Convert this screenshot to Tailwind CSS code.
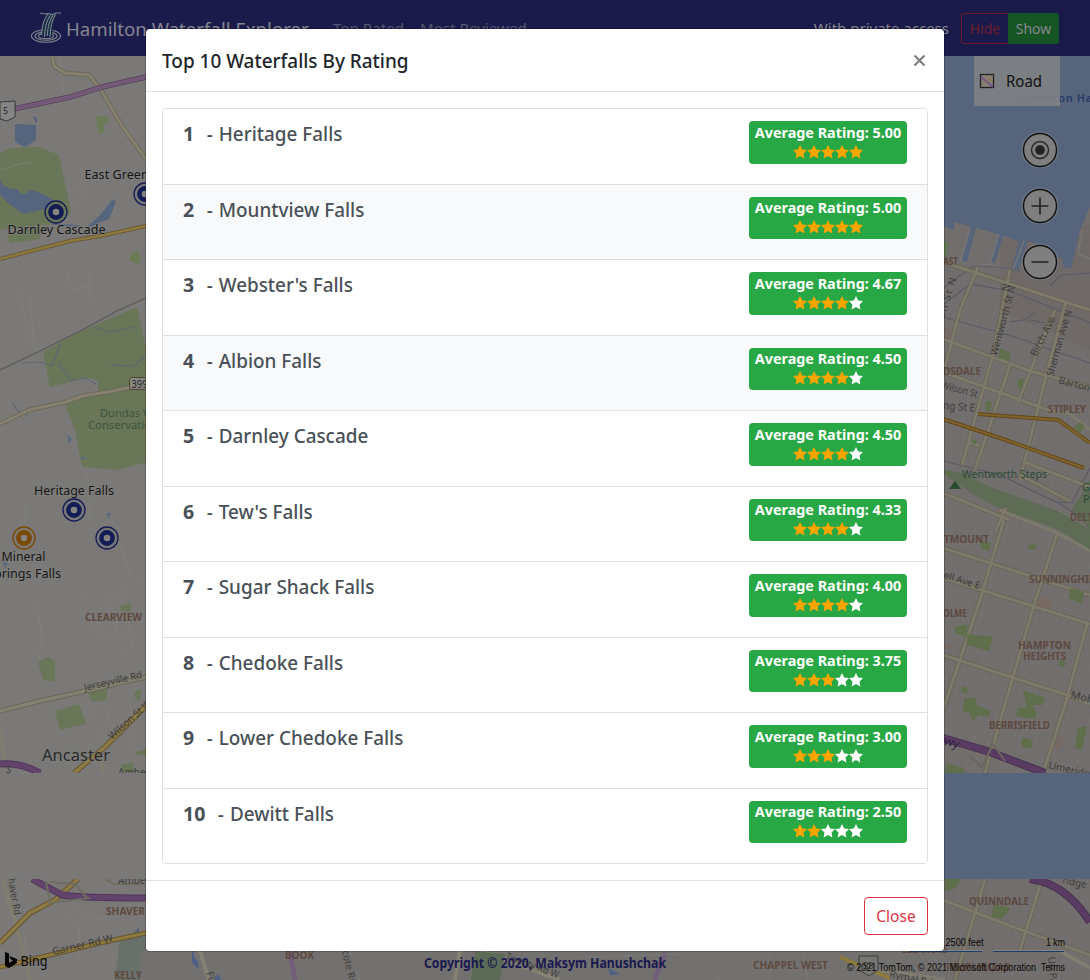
<!DOCTYPE html>
<html lang="en">
<head>
<meta charset="utf-8">
<title>Hamilton Waterfall Explorer</title>
<script src="https://cdn.jsdelivr.net/npm/@tailwindcss/browser@4"></script>
</head>
<body class="relative h-[980px] w-[1090px] overflow-hidden bg-[#7a7977] font-['Noto_Sans',sans-serif]">

<!-- Map canvas -->
<svg class="absolute inset-0" width="1090" height="980" viewBox="0 0 1090 980" fill="none" font-family="Noto Sans, sans-serif">
  <defs>
    <pattern id="streets" width="15" height="30" patternUnits="userSpaceOnUse" patternTransform="rotate(17)">
      <path d="M0 0H15M0 0V30M7.500 0V30" stroke="#7c7875" stroke-width="1"/>
    </pattern>
    <g id="pin"><circle r="11" stroke-width="1.300" stroke="currentColor"/><circle r="5.600" stroke="currentColor" stroke-width="4.600" fill="#858483"/></g>
  </defs>
  <rect y="56" width="1090" height="924" fill="#7a7977"/>
  <!-- west side -->
  <g stroke="#807f7c" stroke-width="1">
    <path d="M60 56L63 92M20 290L28 340L36 350M30 296L34 345L42 352M68 190L81 186L84 200L66 206M67 270L71 290L88 286M90 270L89 290L92 305M25 504L26 560M36 595L42 640L38 660M82 600L96 590L120 600M80 610L100 625L140 620M85 625L110 640L140 635M120 585L128 620L134 650M110 595L118 640L130 660M85 690L95 720L105 750M100 690L115 735M130 700L135 750M62 910L80 930L78 960M70 905L95 920L120 915M20 910L28 960M85 465L90 495L89 520M115 530L130 575L146 582"/>
  </g>
  <path d="M0 153L10 148L39 147L59 155L71 212L60 223L0 230Z" fill="#697657"/>
  <path d="M7 235L40 226V239L10 243Z" fill="#6b7759"/>
  <path d="M0 170L20 164L30 162" stroke="#7c8371"/>
  <path d="M0 180Q5 190 17 189Q24 199 29 190Q40 191 53 200L48 208L24 214Q10 206 0 195ZM15 124L36 125L36 140L25 147L15 142ZM32 116L37 118V124ZM88 226L100 215L113 199L116 202L109 219L98 223L91 227Z" fill="#55657d"/>
  <path d="M52 224L80 226" stroke="#55657d" stroke-width="1.500"/>
  <path d="M96 116L109 117L108 123L103 124L105 132L99 134ZM130 255L138 250L141 260L138 264L130 261Z" fill="#6b7b56"/>
  <path d="M52 56L54 66L65 73L89 75L101 90L122 126L146 159" stroke="#6c6452" stroke-width="4.500"/>
  <path d="M52 56L54 66L65 73L89 75L101 90L122 126L146 159" stroke="#858070" stroke-width="3"/>
  <path d="M14 109L70 97L102 87L146 77" stroke="#5a465c" stroke-width="5.500"/>
  <path d="M14 109L70 97L102 87L146 77" stroke="#785f7e" stroke-width="3.500"/>
  <path d="M14 109L70 97L102 87L146 77" stroke="#6b4e70" stroke-width=".8"/>
  <path d="M0 102L15 101V117L7 121L0 119Z" fill="#858585" stroke="#393939"/>
  <text x="3" y="114" font-size="9" fill="#222">5</text>
  <path d="M0 259L70 241L100 236L146 226" stroke="#665333" stroke-width="4"/>
  <path d="M0 259L70 241L100 236L146 226" stroke="#8b793d" stroke-width="2.500"/>
  <path d="M43 352L75 334L137 307L146 348V462L118 470L82 467L75 430L65 405L98 392V382Q92 376 82 379L50 387Z" fill="#697657"/>
  <path d="M0 370L38 352L82 330L117 311L146 298" stroke="#5b5957" stroke-width="1.300"/>
  <path d="M22 363L42 362L52 366L61 343M58 362L70 380L85 378L96 384M93 327L110 332L136 327M111 365L134 366L146 355M13 403L17 410L28 416" stroke="#5f6872" stroke-width="1.200"/>
  <path d="M0 424L29 410L66 402L82 396L113 391L131 387L146 386" stroke="#6c6452" stroke-width="4.500"/>
  <path d="M0 424L29 410L66 402L82 396L113 391L131 387L146 386" stroke="#858070" stroke-width="3"/>
  <rect x="129.500" y="377.500" width="20" height="12" rx="2" fill="#858581" stroke="#4e452e"/>
  <text x="131.500" y="387.500" font-size="10" fill="#252525" textLength="16" lengthAdjust="spacingAndGlyphs">399</text>
  <path d="M67 435L72 439L69 444ZM81 457H87L82 460ZM107 513L111 513L108 519ZM3 562L8 563L5 568Z" fill="#596983"/>
  <path d="M38 662L48 657L55 661V682L43 680ZM120 606L131 603V612L121 611ZM88 692L107 687V700L92 702ZM55 711L79 704L86 724L60 730ZM134 692L141 689L140 701L136 700ZM121 765L133 762L134 772H122ZM136 752L146 749V756L136 754Z" fill="#697657"/>
  <path d="M0 711L40 701L90 690L146 677" stroke="#686151" stroke-width="5"/>
  <path d="M0 711L40 701L90 690L146 677" stroke="#838071" stroke-width="3.500"/>
  <path d="M0 730L5 764M99 754L104 773M2 879L15 920L30 980" stroke="#817e70" stroke-width="4"/>
  <path d="M74 773L105 747L146 706M0 943L30 913L55 900L78 879" stroke="#665333" stroke-width="5.500"/>
  <path d="M74 773L105 747L146 706M0 943L30 913L55 900L78 879" stroke="#8c7a46" stroke-width="3.500"/>
  <path d="M0 764Q20 762 40 773M32 879L62 895Q80 898 146 898" stroke="#50345a" stroke-width="7"/>
  <path d="M0 764Q20 762 40 773M32 879L62 895Q80 898 146 898" stroke="#62436c" stroke-width="5"/>
  <path d="M46 882L50 903L90 898M50 882L75 884L87 898M105 879L114 884L140 884" stroke="#6e6d60" stroke-width="2"/>
  <path d="M120 940L146 935V980H115Z" fill="#68706a"/><path d="M133 934L139 927V934Z" fill="#55657d"/>
  <path d="M0 967L50 955L100 943L146 933" stroke="#665333" stroke-width="5"/>
  <path d="M0 967L50 955L100 943L146 933" stroke="#8c793c" stroke-width="3"/>
  <rect y="773" width="146" height="106" fill="#7a7977"/>
  <!-- strip under the dialog -->
  <rect x="140" y="950" width="810" height="30" fill="#73716f"/>
  <path d="M200 951L209 980M460 951L455 980M481 951L560 980" stroke="#858173" stroke-width="4"/>
  <path d="M290 951L295 980M665 951L655 980" stroke="#735e7b" stroke-width="5"/>
  <path d="M475 951L505 954L500 980H471Z" fill="#5b6b55"/><path d="M192 951V962L199 970L198 962L194 957V951ZM214 980L218 974L222 980ZM608 968L620 974L610 975Z" fill="#4e6087"/>
  <path d="M350 951L360 980M570 958L680 954M690 951L720 980M770 951V980M802 951L808 980" stroke="#7b7976"/>
  <!-- east side -->
  <path d="M943 56H1090V980H943Z" fill="#716e6d"/>
  <path d="M943 290H1090V980H943Z" fill="url(#streets)" opacity=".4"/>
  <path d="M1000 240L1090 225V350L1000 310Z" fill="#6f6866" opacity=".8"/>
  <path d="M943 56H1090V207L1080 230L1071 268H1063V258L1048 256L1038 244L1028 241L1019 270L1012 268L1019 241L1003 236L995 263L990 262L998 234L976 228L967 262L961 260L970 226L954 222V230L943 226Z" fill="#56657b"/>
  <path d="M970 228L961 261M999 234L990 264L972 267M1024 241L1013 270L991 265M1082 230L1078 254L1090 259" stroke="#7b7977" stroke-width="1.300"/>
  <path d="M943 240L949 243L946 256L943 258Z" fill="#617551"/>
  <g stroke="#5a5b67" stroke-width="1.200">
    <path d="M943 289L958 277L974 266L1000 267L1020 271M943 305L970 284L1010 291L1090 323M943 317L1015 337L1060 353L1090 363M1050 286L1061 275L1090 273M1010 322L1025 320L1036 312M1030 320L1045 323M943 461L1000 475L1060 504L1090 523M1055 502L1072 503L1090 468"/>
  </g>
  <path d="M943 470Q963 471 990 487L1060 512L1090 530V551Q1065 530 1035 521Q990 510 943 473Z" fill="#5e6b55"/>
  <path d="M1078 500L1090 480V530L1072 510Z" fill="#5e6b55"/>
  <path d="M991 513L1006 507L1005 516L990 513ZM943 327L954 331L950 343L943 340ZM1041 597L1053 600L1050 611L1034 610ZM943 642L960 649L943 648ZM1058 734L1064 741L1059 750L1054 748Z" fill="#796965"/>
  <g stroke="#686351" stroke-width="4.500">
    <path d="M943 262L1090 310M943 339L1030 371L1090 387M978 267L960 310L943 375M943 372L1048 410M1010 270L993 355L962 465M1066 302L1045 380L1020 480M1010 365L975 470M1035 360L1018 402M1055 310L1034 360M968 442L980 446M1024 462L1090 487M1020 475L1070 501M943 493L1010 520M1006 508L996 530M1004 520L980 600L943 710M1057 534L1034 605L985 773M943 548L1090 595M943 578L1090 624M943 655L1070 696L1090 704M1087 624L1065 705L1043 773M943 900L1000 922L1090 955M985 879L955 980M1042 879L1020 950"/>
  </g>
  <g stroke="#7d7a6c" stroke-width="3">
    <path d="M943 262L1090 310M943 339L1030 371L1090 387M978 267L960 310L943 375M943 372L1048 410L1070 414L1090 430M1010 270L993 355L962 465M1066 302L1045 380L1020 480M1010 365L975 470M1035 360L1018 402M1055 310L1034 360M968 442L980 446M1024 462L1090 487M1020 475L1070 501M943 493L1010 520M1006 508L996 530M1004 520L980 600L943 710M1057 534L1034 605L985 773M943 548L1090 595M943 578L1090 624M943 655L1070 696L1090 704M1087 624L1065 705L1043 773M943 900L1000 922L1090 955M985 879L955 980M1042 879L1020 950M1000 510L1055 532Q1080 545 1090 551"/>
  </g>
  <path d="M978 414L1058 420L1090 443M943 419L1000 438L1084 468" stroke="#644819" stroke-width="4"/>
  <path d="M978 414L1058 420L1090 443M943 419L1000 438L1084 468" stroke="#7d622d" stroke-width="2.200"/>
  <path d="M1000 348L1010 353L1009 361L998 358ZM1018 380L1024 378L1022 389L1017 387ZM986 401L992 401L990 412L985 410ZM1074 427L1080 422L1085 427L1078 434ZM973 439L977 440L975 445L972 443ZM943 470L950 472V479ZM1029 545L1037 544L1035 550L1029 549ZM980 541L991 543L989 551L981 549ZM1070 588L1084 592L1082 604L1069 598ZM955 627L967 624V634L993 637L989 651L967 645V637L955 633ZM1060 660L1066 662L1064 667L1059 666ZM962 686L968 688L966 694L961 692ZM964 699L975 697L977 705L990 711V717L978 715L973 721L968 712H963ZM1023 690L1045 698L1043 705H1032L1037 713L1035 719L1016 716L1018 708L1027 707ZM1022 737L1033 741L1031 749L1021 746ZM1078 728L1087 726L1082 750L1075 748ZM946 763L963 768L965 773H945ZM945 879H962L955 888L945 891ZM994 904L1011 908L1002 919L991 917Z" fill="#5f6f4c"/>
  <path d="M943 738L990 752L1045 773M1030 879Q1065 883 1090 922" stroke="#47314f" stroke-width="8"/>
  <path d="M943 738L990 752L1045 773M1030 879Q1065 883 1090 922" stroke="#5a3c63" stroke-width="6"/>
  <path d="M970 756L982 767L993 744L1005 761" stroke="#6b675e" stroke-width="2"/>
  <path d="M1060 951L1090 968M880 970L945 980" stroke="#807c70" stroke-width="4"/>
  <path d="M840 957L870 970L890 978" stroke="#8c793c" stroke-width="4"/>
  <rect x="943" y="773" width="147" height="106" fill="#56657b"/>
  <path d="M949 489L955 481L961 489Z" fill="#294b2f"/>

  <!-- map labels -->
  <g font-size="12" fill="#161616" stroke="#858483" stroke-width="2" stroke-opacity=".45" paint-order="stroke" stroke-linejoin="round">
    <text x="84.500" y="179" textLength="87" lengthAdjust="spacingAndGlyphs">East Greenbelt</text>
    <text x="7.500" y="234" textLength="98" lengthAdjust="spacingAndGlyphs">Darnley Cascade</text>
    <text x="34" y="495" textLength="80" lengthAdjust="spacingAndGlyphs">Heritage Falls</text>
    <text x="1.500" y="561" textLength="44" lengthAdjust="spacingAndGlyphs">Mineral</text>
    <text x="-13" y="578" textLength="74" lengthAdjust="spacingAndGlyphs">Springs Falls</text>
    <text x="42" y="761" font-size="17" fill="#292929" textLength="68" lengthAdjust="spacingAndGlyphs">Ancaster</text>
  </g>
  <g fill="#3c5540" font-size="11">
    <text x="100" y="417" textLength="73" lengthAdjust="spacingAndGlyphs">Dundas Valley</text>
    <text x="88" y="429" textLength="70" lengthAdjust="spacingAndGlyphs">Conservation</text>
    <text x="962" y="478" fill="#294b35" textLength="85" lengthAdjust="spacingAndGlyphs">Wentworth Steps</text>
    <text x="1082" y="491" fill="#294b35">Gage</text><text x="1083" y="503" fill="#294b35">Park</text>
  </g>
  <g fill="#5e483f" font-size="10.200" font-weight="700">
    <text x="85" y="621" textLength="57" lengthAdjust="spacingAndGlyphs">CLEARVIEW</text>
    <text x="106" y="915" textLength="39" lengthAdjust="spacingAndGlyphs">SHAVER</text>
    <text x="114" y="979" textLength="28" lengthAdjust="spacingAndGlyphs">KELLY</text>
    <text x="285" y="959" textLength="29" lengthAdjust="spacingAndGlyphs">BOOK</text>
    <text x="943" y="265" textLength="15" lengthAdjust="spacingAndGlyphs">AST</text>
    <text x="943" y="375" textLength="38" lengthAdjust="spacingAndGlyphs">DSDALE</text>
    <text x="1048" y="413" textLength="38" lengthAdjust="spacingAndGlyphs">STIPLEY</text>
    <text x="1070" y="521" textLength="29" lengthAdjust="spacingAndGlyphs">DELTA</text>
    <text x="944" y="543" textLength="45" lengthAdjust="spacingAndGlyphs">TMOUNT</text>
    <text x="1029" y="583" textLength="71" lengthAdjust="spacingAndGlyphs">SUNNINGHILL</text>
    <text x="943" y="617" textLength="24" lengthAdjust="spacingAndGlyphs">OLME</text>
    <text x="1018" y="649" textLength="53" lengthAdjust="spacingAndGlyphs">HAMPTON</text>
    <text x="1023" y="660" textLength="43" lengthAdjust="spacingAndGlyphs">HEIGHTS</text>
    <text x="989" y="729" textLength="61" lengthAdjust="spacingAndGlyphs">BERRISFIELD</text>
    <text x="969" y="905" textLength="60" lengthAdjust="spacingAndGlyphs">QUINNDALE</text>
    <text x="902" y="953" textLength="46" lengthAdjust="spacingAndGlyphs">ELEANORS</text>
    <text x="753" y="969" textLength="75" lengthAdjust="spacingAndGlyphs">CHAPPEL WEST</text>
    <text x="945" y="971" textLength="66" lengthAdjust="spacingAndGlyphs">TEMPLEMEAD</text>
  </g>
  <g fill="#3f3e3c" font-size="10">
    <text transform="translate(85 691) rotate(-13)" textLength="59" lengthAdjust="spacingAndGlyphs">Jerseyville Rd</text>
    <text transform="translate(112 740) rotate(-42)" textLength="54" lengthAdjust="spacingAndGlyphs">Wilson St W</text>
    <text transform="translate(53 955) rotate(-13)" textLength="62" lengthAdjust="spacingAndGlyphs">Garner Rd W</text>
    <text transform="translate(8 879) rotate(80)" textLength="37" lengthAdjust="spacingAndGlyphs">haver Rd</text>
    <text x="118" y="776">Ambe</text><rect x="117" y="773" width="29" height="10" fill="#7a7977"/>
    <text x="118" y="884">Ambe</text><rect x="117" y="870" width="29" height="9" fill="#7a7977"/>
    <text x="5" y="772" font-size="10" transform="rotate(20 5 772)">S</text>
    <text transform="translate(342 951) rotate(77)">cote Rd</text>
    <text transform="translate(206 973) rotate(70)">Fi</text>
    <text transform="translate(505 959) rotate(20)" textLength="56" lengthAdjust="spacingAndGlyphs">Twenty Rd W</text>
    <text transform="translate(889 977) rotate(12)">Rymal Rd</text>
    <text transform="translate(1008 292) rotate(-74)">N</text>
    <text transform="translate(944 319) rotate(-73)" textLength="42">on St N</text>
    <text transform="translate(997 356) rotate(-75)" textLength="72" lengthAdjust="spacingAndGlyphs">Wentworth St N</text>
    <text transform="translate(1036 357) rotate(-63)" textLength="43" lengthAdjust="spacingAndGlyphs">Birch Ave</text>
    <text transform="translate(1053 377) rotate(-74)" textLength="69" lengthAdjust="spacingAndGlyphs">Sherman Ave N</text>
    <text transform="translate(1058 383) rotate(15)" textLength="52">Barton St E</text>
    <text transform="translate(941 388) rotate(15)" textLength="37" lengthAdjust="spacingAndGlyphs">Wilson St</text>
    <text transform="translate(943 409) rotate(5)" font-size="11" textLength="32" lengthAdjust="spacingAndGlyphs">ng St E</text>
    <text transform="translate(943 578) rotate(17)" textLength="38" lengthAdjust="spacingAndGlyphs">ell Ave E</text>
    <text transform="translate(1070 698) rotate(14)" font-size="11">Mohawk</text>
    <text transform="translate(1048 768) rotate(13)">Limeridge</text><rect x="1040" y="773" width="50" height="12" fill="#56657b"/>
    <text transform="translate(943 744) rotate(17)" fill="#331f46" font-size="12">wy</text>
    <text transform="translate(1062 883) rotate(12)">ridge</text><rect x="1055" y="868" width="35" height="11" fill="#56657b"/>
    <text transform="translate(1048 957) rotate(85)">Up Pa</text>
  </g>
  <g color="#141c56"><use href="#pin" x="56" y="212"/><use href="#pin" x="145" y="194"/><use href="#pin" x="74" y="510"/><use href="#pin" x="107" y="538"/></g>
  <g color="#7a4a04"><use href="#pin" x="24" y="538"/></g>

  <!-- map controls -->
  <text x="1019" y="102" font-size="11" font-weight="600" fill="#253a69" textLength="106">Hamilton Harbour</text>
  <rect x="974" y="56" width="86" height="50" fill="#7f8184" opacity=".9"/>
  <rect x="980.500" y="74.500" width="13" height="13" fill="#858078" stroke="#202020" stroke-width="1.300"/>
  <path d="M981 77L986 81L993 87" stroke="#76548b" stroke-width="1.800"/><path d="M981 86L986 82L993 75M984 75L992 82" stroke="#94784d" stroke-width="1"/>
  <text x="1006" y="87" font-size="15.500" fill="#111" textLength="36" lengthAdjust="spacingAndGlyphs">Road</text>
  <g fill="#7f7f80" stroke="#121212" stroke-width="1.400">
    <g stroke="#83858a" stroke-width="3" opacity=".5"><circle cx="1040" cy="150" r="17"/><circle cx="1040" cy="206" r="17"/><circle cx="1040" cy="262" r="17"/></g>
    <circle cx="1040" cy="150" r="16.500"/><circle cx="1040" cy="206" r="16.500"/><circle cx="1040" cy="262" r="16.500"/>
    <circle cx="1040" cy="150" r="8.500" stroke="#272727"/><circle cx="1040" cy="150" r="4.800" fill="#222" stroke="none"/>
    <path d="M1031.500 206H1048.500M1040 197.500V214.500M1031.500 262H1048.500" stroke="#222" stroke-width="1.600"/>
  </g>
  <path d="M5 952L9 953.500V963L13 960.500L10.500 959L9.500 956L17 959V963L9 968L5 966Z" fill="#050505"/>
  <text x="20.500" y="966" font-size="14" fill="#080808" textLength="27" lengthAdjust="spacingAndGlyphs">Bing</text>
  <path d="M859 956H878V970L869 976L859 970Z" stroke="#3c3c3c" fill="#777672"/><text x="863" y="969" font-size="9" fill="#333">53</text>
  <g font-size="10" fill="#080808" font-family="Liberation Sans, sans-serif">
    <text x="945.500" y="946" textLength="38" lengthAdjust="spacingAndGlyphs">2500 feet</text>
    <text x="1046" y="946" textLength="19" lengthAdjust="spacingAndGlyphs">1 km</text>
    <text x="847" y="971" textLength="189" lengthAdjust="spacingAndGlyphs">© 2021 TomTom, © 2021 Microsoft Corporation</text>
    <text x="1041" y="971" textLength="24" lengthAdjust="spacingAndGlyphs">Terms</text>
  </g>
  <path d="M910 950.500H982M993 950.500H1064" stroke="#858483" stroke-width="1"/>
  <path d="M910 951.500H982M993 951.500H1064" stroke="#1b3d68" stroke-width="1"/>
  <text x="424" y="968" font-size="13.300" font-weight="700" fill="#191950" textLength="242" lengthAdjust="spacingAndGlyphs">Copyright © 2020, Maksym Hanushchak</text>
</svg>

<!-- Navigation bar -->
<nav class="relative flex h-14 items-center bg-[#1b1b4b] pl-[30px] pr-[31px] text-[#86868f]">
  <svg class="mr-1 shrink-0" width="32" height="32" viewBox="0 0 32 32" fill="none" stroke="#80868e">
    <g stroke-width="1.100">
      <ellipse cx="16" cy="24" rx="14.500" ry="6.200"/>
      <ellipse cx="16" cy="24" rx="11" ry="4.300"/>
      <ellipse cx="16" cy="24" rx="7.500" ry="2.600"/>
    </g>
    <path d="M18 2L27 2Q22 10 22 24L11 24Q11 10 18 2Z" fill="#142b46" stroke="none"/>
    <path d="M10 1L15 2L18 1.500L23 2.500L26 1H31M18 2Q12.500 8 11.500 23M20.500 3Q15 10 14.500 25M23 3Q18 10 17.200 24M25.500 2.500Q20.500 10 20 25" stroke-width="1.100"/>
  </svg>
  <span class="w-[243px] whitespace-nowrap pt-px text-[18.650px]">Hamilton Waterfall Explorer</span>
  <span class="ml-6 whitespace-nowrap text-[15.150px] text-[#55556f]">Top Rated</span>
  <span class="ml-4 whitespace-nowrap text-[15.150px] text-[#55556f]">Most Reviewed</span>
  <span class="ml-auto whitespace-nowrap text-[15px]">With private access</span>
  <div class="ml-3 flex h-[31px] w-[98px] overflow-hidden rounded-[3px] text-[14px]">
    <span class="flex w-[47px] items-center justify-center rounded-l-[3px] border border-r-0 border-[#6e1b2c] pt-px text-[#6e1b2c]">Hide</span>
    <span class="flex flex-1 items-center justify-center bg-[#145523] pt-px">Show</span>
  </div>
</nav>

<!-- Dialog -->
<main class="absolute left-[146px] top-[29px] flex h-[922px] w-[798px] flex-col overflow-hidden rounded-[4px] bg-white text-[#495057] ring-1 ring-black/20">
  <header class="flex h-[63px] shrink-0 items-center justify-between border-b border-[#dee2e6] px-4 text-[#212529]">
    <h1 id="title" class="whitespace-nowrap pt-[3px] text-[18.950px] font-medium">Top 10 Waterfalls By Rating</h1>
    <svg class="mr-[2px]" width="13" height="13" viewBox="0 0 13 13" stroke="#7f7f7f" stroke-width="2.200"><path d="M1.500 1.500L11.500 11.500M11.500 1.500L1.500 11.500"/></svg>
  </header>
  <section class="flex-1 overflow-hidden px-4 pt-4">
    <ol id="list" class="h-[756px] overflow-hidden rounded-[4px] border border-[#dfdfdf]"></ol>
    <div class="mt-[15px] h-4 rounded-t border-x border-[#dfdfdf]"></div>
  </section>
  <footer class="flex h-[71px] shrink-0 items-center justify-end border-t border-[#dee2e6] px-4">
    <button class="h-[38px] w-16 rounded-[4px] border border-[#dc3545] pt-px text-[15.500px] text-[#dc3545]">Close</button>
  </footer>
</main>

<script>
const falls = [["Heritage Falls","5.00"],["Mountview Falls","5.00"],["Webster's Falls","4.67"],["Albion Falls","4.50"],["Darnley Cascade","4.50"],["Tew's Falls","4.33"],["Sugar Shack Falls","4.00"],["Chedoke Falls","3.75"],["Lower Chedoke Falls","3.00"],["Dewitt Falls","2.50"]];
document.getElementById("list").innerHTML = falls.map(([name, rating], i) => {
  const stars = [0,1,2,3,4].map(n => `<svg class="h-[14px] w-[14px]" viewBox="0 0 14 14" fill="${n < Math.floor(+rating) ? "#ffa500" : "#fff"}"><path d="M7 0L9.200 4.400L14 5.100L10.500 8.500L11.400 13.500L7 11.100L2.600 13.500L3.500 8.500L0 5.100L4.800 4.400Z"/></svg>`).join("");
  return `<li class="flex h-[75.5px] items-start justify-between border-b border-[#dfdfdf] px-5 pt-3 ${i === 1 || i === 3 ? "bg-[#f8f9fa]" : "bg-white"}">
    <h2 class="flex whitespace-nowrap text-[18.900px] leading-[26px] font-medium"><b class="mr-[12.5px] text-[19.500px] font-bold">${i + 1}</b><span class="mr-[6px]">-</span><span>${name}</span></h2>
    <div class="flex h-[42.5px] w-[158px] flex-col items-center rounded-[4px] bg-[#28a745] pt-[3.5px] text-white">
      <span class="whitespace-nowrap text-[14.400px] leading-[16px] font-bold">Average Rating: ${rating}</span>
      <span class="mt-1 flex">${stars}</span>
    </div>
  </li>`;
}).join("");
</script>
</body>
</html>
